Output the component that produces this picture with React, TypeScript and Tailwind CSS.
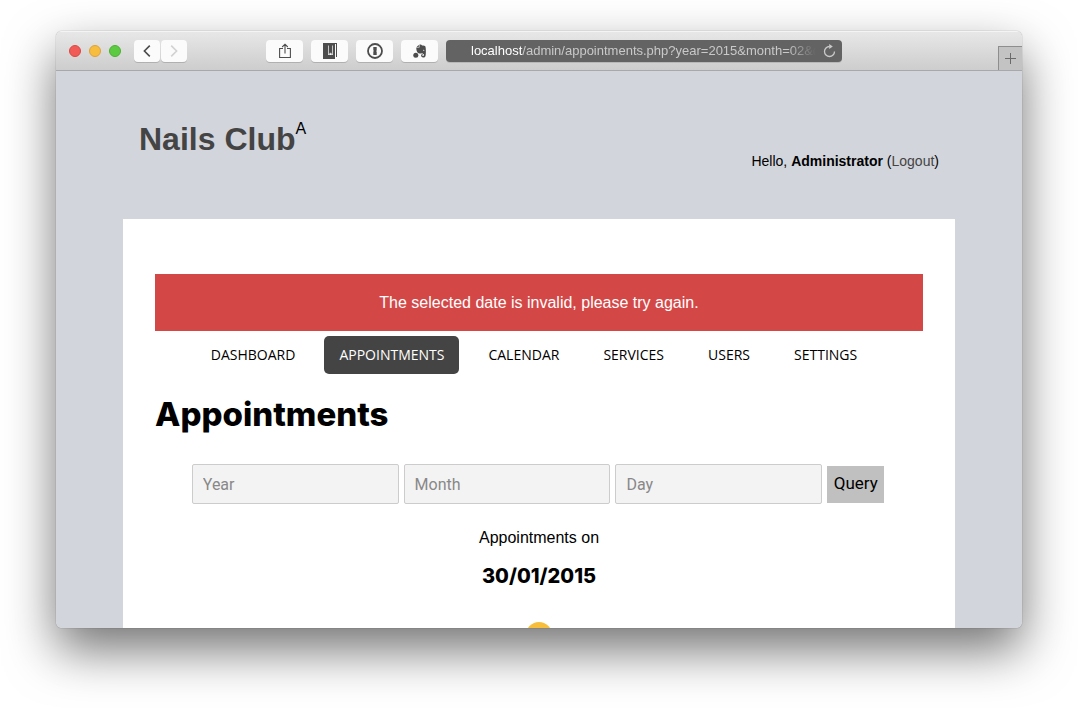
import React from "react";

const navItems = ["Dashboard", "Appointments", "Calendar", "Services", "Users", "Settings"];

function ToolButton({ label, children }: { label: string; children: React.ReactNode }) {
  return (
    <button
      type="button"
      aria-label={label}
      className="flex h-[22px] w-[37px] shrink-0 items-center justify-center rounded bg-[#fbfbfb] text-[#4d4d4d] shadow-[0_1px_0_rgba(0,0,0,0.16)]"
    >
      {children}
    </button>
  );
}

function Toolbar() {
  return (
    <header className="flex h-10 shrink-0 items-center border-b border-[#a8a8a8] bg-linear-to-b from-[#e8e8e8] to-[#cdcdcd] pt-px pl-[13px] shadow-[inset_0_1px_0_#f4f4f4]">
      <div className="flex gap-2">
        <button type="button" aria-label="Close" className="size-3 rounded-full border border-[#dd4642] bg-[#f05b57]" />
        <button type="button" aria-label="Minimize" className="size-3 rounded-full border border-[#e0a136] bg-[#f6bd3f]" />
        <button type="button" aria-label="Zoom" className="size-3 rounded-full border border-[#4cb02f] bg-[#5dcb41]" />
      </div>
      <div className="ml-[13px] flex gap-px">
        <button type="button" aria-label="Back" className="flex h-[22px] w-[26px] items-center justify-center rounded bg-[#fbfbfb] text-[#4d4d4d] shadow-[0_1px_0_rgba(0,0,0,0.16)]">
          <svg width="8" height="12" viewBox="0 0 8 12" fill="none" stroke="currentColor" strokeWidth="1.6"><path d="M6.8.6 1.4 6l5.4 5.4" /></svg>
        </button>
        <button type="button" aria-label="Forward" className="flex h-[22px] w-[26px] items-center justify-center rounded bg-[#fbfbfb] text-[#d2d2d2] shadow-[0_1px_0_rgba(0,0,0,0.16)]">
          <svg width="8" height="12" viewBox="0 0 8 12" fill="none" stroke="currentColor" strokeWidth="1.6"><path d="M1.2.6 6.6 6l-5.4 5.4" /></svg>
        </button>
      </div>
      <div className="ml-[79px] flex min-w-0 flex-1 gap-2">
        <ToolButton label="Share">
          <svg width="12" height="16" viewBox="0 0 12 16" fill="none" stroke="currentColor" strokeWidth="1.1"><path d="M4 5.5H.6v9h10.8v-9H8M6 10.5V1.2M3.2 4 6 1.2 8.8 4" /></svg>
        </ToolButton>
        <ToolButton label="Bookmarks">
          <svg width="14" height="16" viewBox="0 0 14 16">
            <path d="M0 0h14v14h-1V1H0z" fill="currentColor" />
            <path d="M0 1h12v15H0z" fill="currentColor" />
            <path d="M5.500 2.500v9.500l2-2.200 2 2.200V2.500" fill="none" stroke="#fbfbfb" strokeWidth=".7" />
            <path d="m6 12 1.500-2 1.500 2z" fill="#fbfbfb" />
          </svg>
        </ToolButton>
        <ToolButton label="Passwords">
          <svg width="16" height="16" viewBox="0 0 16 16"><circle cx="8" cy="8" r="7" fill="none" stroke="currentColor" strokeWidth="1.8" /><path d="M6.300 4h3.400v3.400l-.6.7.6.7V12H6.300V8.600l.6-.7-.6-.7z" fill="currentColor" /></svg>
        </ToolButton>
        <ToolButton label="Clipper">
          <svg width="14" height="14" viewBox="0 0 14 14" fill="currentColor">
            <circle cx="2.800" cy="11.300" r="2.500" />
            <path d="M3.700 2.900 5.800.8v2.100zM6.500.6c1.600 0 2.200.2 2.500.8 1.600.1 3.100.2 3.400 1 .6 2 .6 6 .3 8.500-.2 1.800-1 2.600-2.500 2.600s-2.100-.8-2.100-1.900.6-1.600 1.500-1.600v1.200c-.5.100-.5.900.3.900.8 0 1.100-.6 1.100-1.800-.9-.2-1.500-.7-1.800-1.400-.6.700-1.500.8-2.700.6C4.400 9.200 3.300 7.600 3.300 3.600h3.200z" />
            <path d="M9.800 6.400c.2-.8 1.500-.8 1.600.3z" fill="#fbfbfb" />
          </svg>
        </ToolButton>
        <div className="flex h-[22px] min-w-0 max-w-[396px] flex-1 items-center rounded bg-[#636363] pr-1.5 pl-[25px] text-[#c9c9c9] shadow-[0_1px_0_rgba(0,0,0,0.12)]">
          <button
            type="button"
            aria-label="Address"
            className="min-w-0 flex-1 overflow-hidden text-left text-[13px] leading-5 whitespace-nowrap [mask-image:linear-gradient(to_right,black_90%,transparent_98%)]"
          >
            <span className="text-white">localhost</span>/admin/appointments.php?year=2015&amp;month=02&amp;d
          </button>
          <button type="button" aria-label="Reload" className="shrink-0">
            <svg width="13" height="14" viewBox="0 0 13 14" fill="none" stroke="currentColor" strokeWidth="1.3"><path d="M6.500 2.500a5 5 0 1 0 5 5" /><path d="M6.200 0v5l3.600-2.500z" fill="currentColor" stroke="none" /></svg>
          </button>
        </div>
      </div>
      <button type="button" aria-label="New tab" className="flex h-6 w-6 shrink-0 items-center justify-center self-end border-t border-l border-[#8e8e8e] bg-[#c3c3c3] text-[#6a6a6a]">
        <svg width="11" height="11" viewBox="0 0 11 11" stroke="currentColor"><path d="M5.500 0v11M0 5.500h11" /></svg>
      </button>
    </header>
  );
}

export default function App() {
  return (
    <div className="h-screen min-h-[400px] bg-white px-14 pt-[31px] pb-20 font-['Liberation_Sans',Arial,sans-serif] text-base text-black">
      <div className="flex h-full flex-col overflow-hidden rounded-md shadow-[0_0_1px_rgba(0,0,0,0.6),0_22px_50px_rgba(0,0,0,0.55)]">
        <Toolbar />
        <div className="min-h-0 flex-1 overflow-hidden bg-[#d2d5dc]">
          <div className="mx-auto max-w-[832px]">
            <div className="flex h-[148px] items-start justify-between px-4 pt-12">
              <h1 className="flex items-start">
                <a href="#home" className="text-[32px] leading-10 font-bold text-[#444444]">Nails Club</a>
                <sup className="top-0 text-base leading-5">A</sup>
              </h1>
              <p className="pt-8 text-sm leading-5">
                Hello, <strong>Administrator</strong> (<a href="#logout" className="text-[#444444]">Logout</a>)
              </p>
            </div>
            <main className="h-[600px] bg-white px-8 pt-[55px]">
              <p role="alert" className="bg-[#d44747] py-4 text-center leading-[25px] text-white">
                The selected date is invalid, please try again.
              </p>
              <nav className="mt-[5px] flex justify-center gap-[14px] pr-[10px]">
                {navItems.map((item) => (
                  <a
                    key={item}
                    href={`#${item.toLowerCase()}`}
                    className={`rounded-[5px] px-[15px] font-['Open_Sans',sans-serif] text-sm leading-[38px] uppercase ${item === "Appointments" ? "bg-[#444444] text-white" : ""}`}
                  >
                    {item}
                  </a>
                ))}
              </nav>
              <h2 className="mt-5 font-['Inter',sans-serif] text-[33px] leading-10 font-extrabold">Appointments</h2>
              <form className="mt-[30px] flex items-center justify-center gap-[5px] pr-0.5" onSubmit={(e) => e.preventDefault()}>
                {["Year", "Month", "Day"].map((field) => (
                  <input
                    key={field}
                    type="text"
                    aria-label={field}
                    placeholder={field}
                    className="h-10 w-[27%] rounded-[2px] border border-[#cccccc] bg-[#f3f3f3] px-2.5 font-['Roboto',sans-serif] placeholder:text-[#888888]"
                  />
                ))}
                <button type="submit" className="h-[37px] w-[57px] bg-[#c0c0c0] text-center font-['Roboto',sans-serif] text-[17px]">Query</button>
              </form>
              <p className="mt-[22px] text-center leading-6">Appointments on</p>
              <h3 className="mt-[14px] text-center font-['Inter',sans-serif] text-xl leading-6 font-extrabold">30/01/2015</h3>
              <div className="mx-auto mt-[34px] size-[26px] rounded-full bg-[#f6be3b]" />
            </main>
          </div>
        </div>
      </div>
    </div>
  );
}
